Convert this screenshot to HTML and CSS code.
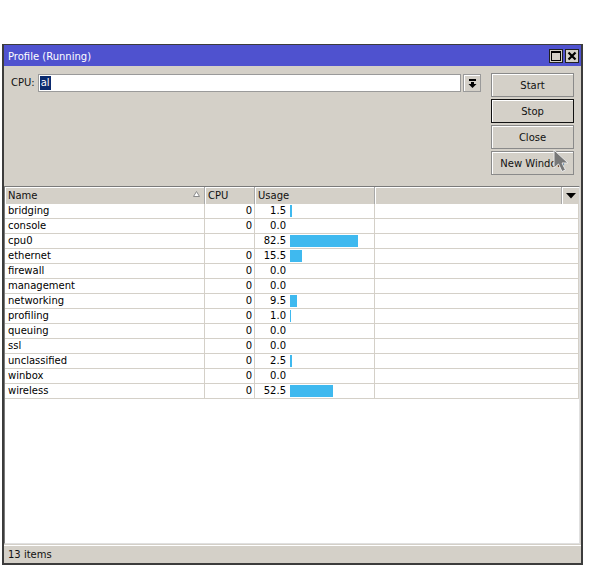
FILE: index.html
```html
<!DOCTYPE html>
<html>
<head>
<meta charset="utf-8">
<link rel="stylesheet" href="styles.css">
</head>
<body>
<div class="spacer"></div>
<div class="window">
  <div class="titlebar">
    <span class="title">Profile (Running)</span>
    <div class="tbtns">
      <span class="tbtn"><svg width="10" height="10" viewBox="0 0 10 10"><rect x="0.5" y="0.5" width="9" height="9" fill="none" stroke="#000" stroke-width="1"/><rect x="0" y="0" width="10" height="2" fill="#000"/></svg></span>
      <span class="tbtn"><svg width="10" height="10" viewBox="0 0 10 10"><path d="M1.5 1.5 L8.5 8.5 M8.5 1.5 L1.5 8.5" stroke="#000" stroke-width="2.2"/></svg></span>
    </div>
  </div>
  <div class="body">
    <div class="top">
      <div class="cpurow">
        <span class="lbl">CPU:</span>
        <div class="input"><span class="sel">al</span></div>
        <span class="ddbtn"><svg width="9" height="9" viewBox="0 0 9 9"><rect x="1" y="0" width="7" height="2" fill="#000"/><path d="M3 3 H6 V5 H8.5 L4.5 9 L0.5 5 H3 Z" fill="#000"/></svg></span>
      </div>
      <div class="buttons">
        <div class="btn">Start</div>
        <div class="btn focus">Stop</div>
        <div class="btn">Close</div>
        <div class="btn">New Window</div>
      </div>
    </div>
    <div class="table">
      <div class="hrow">
        <div class="hcell name">Name<svg class="sort" width="7" height="6" viewBox="0 0 7 6"><path d="M3.5 0.5 L6.5 5.5 H0.5 Z" fill="#fff" stroke="#8a8a8a" stroke-width="1"/></svg></div>
        <div class="hcell">CPU</div>
        <div class="hcell">Usage</div>
        <div class="hcell fill"></div>
        <div class="hcell arrow"><svg width="10" height="6" viewBox="0 0 10 6"><path d="M0 0 H10 L5 5.5 Z" fill="#000"/></svg></div>
      </div>
      <div class="row"><div class="c name">bridging</div><div class="c num">0</div><div class="c usage"><span class="val">1.5</span><span class="bar" style="width:2px"></span></div><div class="c"></div></div>
      <div class="row"><div class="c name">console</div><div class="c num">0</div><div class="c usage"><span class="val">0.0</span></div><div class="c"></div></div>
      <div class="row"><div class="c name">cpu0</div><div class="c num"></div><div class="c usage"><span class="val">82.5</span><span class="bar" style="width:68px"></span></div><div class="c"></div></div>
      <div class="row"><div class="c name">ethernet</div><div class="c num">0</div><div class="c usage"><span class="val">15.5</span><span class="bar" style="width:12px"></span></div><div class="c"></div></div>
      <div class="row"><div class="c name">firewall</div><div class="c num">0</div><div class="c usage"><span class="val">0.0</span></div><div class="c"></div></div>
      <div class="row"><div class="c name">management</div><div class="c num">0</div><div class="c usage"><span class="val">0.0</span></div><div class="c"></div></div>
      <div class="row"><div class="c name">networking</div><div class="c num">0</div><div class="c usage"><span class="val">9.5</span><span class="bar" style="width:7px"></span></div><div class="c"></div></div>
      <div class="row"><div class="c name">profiling</div><div class="c num">0</div><div class="c usage"><span class="val">1.0</span><span class="bar" style="width:1px"></span></div><div class="c"></div></div>
      <div class="row"><div class="c name">queuing</div><div class="c num">0</div><div class="c usage"><span class="val">0.0</span></div><div class="c"></div></div>
      <div class="row"><div class="c name">ssl</div><div class="c num">0</div><div class="c usage"><span class="val">0.0</span></div><div class="c"></div></div>
      <div class="row"><div class="c name">unclassified</div><div class="c num">0</div><div class="c usage"><span class="val">2.5</span><span class="bar" style="width:2px"></span></div><div class="c"></div></div>
      <div class="row"><div class="c name">winbox</div><div class="c num">0</div><div class="c usage"><span class="val">0.0</span></div><div class="c"></div></div>
      <div class="row"><div class="c name">wireless</div><div class="c num">0</div><div class="c usage"><span class="val">52.5</span><span class="bar" style="width:43px"></span></div><div class="c"></div></div>
    </div>
    <div class="status">13 items</div>
  </div>
  <svg class="cursor" width="17" height="24" viewBox="0 0 17 24"><path d="M1 1 L1 19 L5.5 15 L9 22.5 L12.5 21 L9 14 L15 14 Z" fill="#787878" stroke="#e8e8e8" stroke-width="1"/></svg>
</div>
</body>
</html>
```

FILE: styles.css
```css
* { box-sizing: border-box; }
html, body { margin: 0; padding: 0; background: #fff; }
body {
  font-family: "DejaVu Sans", Verdana, sans-serif;
  font-size: 10px;
  color: #000;
  width: 589px;
  height: 565px;
  overflow: hidden;
}
.spacer { height: 44px; }
.window {
  position: relative;
  margin-left: 2px;
  width: 581px;
  height: 521px;
  border: 2px solid #3c3c3c;
  border-top: 1px solid #3c3c3c;
  background: #d4d0c8;
  display: flex;
  flex-direction: column;
}
.titlebar {
  height: 21px;
  background: #4f52cf;
  color: #fff;
  display: flex;
  align-items: center;
  justify-content: space-between;
  padding-left: 4px;
  padding-right: 2px;
  padding-top: 1px;
}
.title { font-size: 10px; }
.tbtns { display: flex; gap: 2px; margin-top: -1px; }
.tbtn {
  width: 14px;
  height: 14px;
  background: #d4d0c8;
  border: 1px solid #202020;
  display: flex;
  align-items: center;
  justify-content: center;
}
.body {
  flex: 1;
  display: flex;
  flex-direction: column;
}
.top {
  height: 120px;
  display: flex;
  padding-top: 7px;
  padding-right: 7px;
}
.cpurow {
  flex: 1;
  display: flex;
  align-items: flex-start;
  padding-left: 7px;
  margin-right: 10px;
  padding-top: 1px;
}
.lbl { line-height: 18px; margin-right: 3px; color: #111; }
.input {
  flex: 1;
  height: 18px;
  background: #fff;
  border: 1px solid #9a9a9a;
  padding-left: 1px;
  display: flex;
  align-items: center;
}
.sel {
  background: #0b2a6e;
  color: #fff;
  line-height: 14px;
  padding: 0 1px;
}
.ddbtn {
  width: 18px;
  height: 18px;
  margin-left: 2px;
  border: 1px solid #9a9a9a;
  box-shadow: inset 1px 1px 0 #fff;
  display: flex;
  align-items: center;
  justify-content: center;
}
.buttons {
  width: 83px;
  display: flex;
  flex-direction: column;
  gap: 2px;
}
.btn {
  height: 24px;
  border: 1px solid #8a8a8a;
  box-shadow: inset 1px 1px 0 #fff;
  display: flex;
  align-items: center;
  justify-content: center;
  color: #111;
}
.btn.focus { border-color: #111; }
.table {
  height: 358px;
  border: 1px solid #7a7a7a;
  border-right-color: #e0e0e0;
  border-bottom-color: #e0e0e0;
  background: #fff;
  margin-right: 1px;
}
.hrow {
  display: grid;
  grid-template-columns: 200px 50px 120px 1fr 17px;
  height: 17px;
  background: #d4d0c8;
  border-bottom: 1px solid #d4d0c8;
}
.hcell {
  border-right: 1px solid #a8a8a8;
  box-shadow: inset 1px 1px 0 #fff;
  padding-left: 3px;
  line-height: 17px;
  position: relative;
  color: #111;
}
.hcell.arrow {
  border-right: none;
  display: flex;
  align-items: center;
  justify-content: center;
  padding-left: 0;
}
.sort { position: absolute; right: 4px; top: 4px; }
.row {
  display: grid;
  grid-template-columns: 200px 50px 120px 1fr;
  height: 15px;
  border-bottom: 1px solid #d4d0c8;
}
.c {
  border-right: 1px solid #d4d0c8;
  line-height: 14px;
  white-space: nowrap;
  overflow: hidden;
}
.c.name { padding-left: 3px; }
.c.num { text-align: right; padding-right: 2px; }
.c.usage { display: flex; align-items: center; }
.val { width: 31px; text-align: right; }
.bar {
  height: 12px;
  background: #3fb9ef;
  margin-left: 4px;
}
.status {
  height: 18px;
  margin-top: 1px;
  padding-left: 4px;
  line-height: 18px;
  border-top: 1px solid #fff;
  color: #111;
}
.cursor {
  position: absolute;
  left: 549px;
  top: 104px;
}
```
